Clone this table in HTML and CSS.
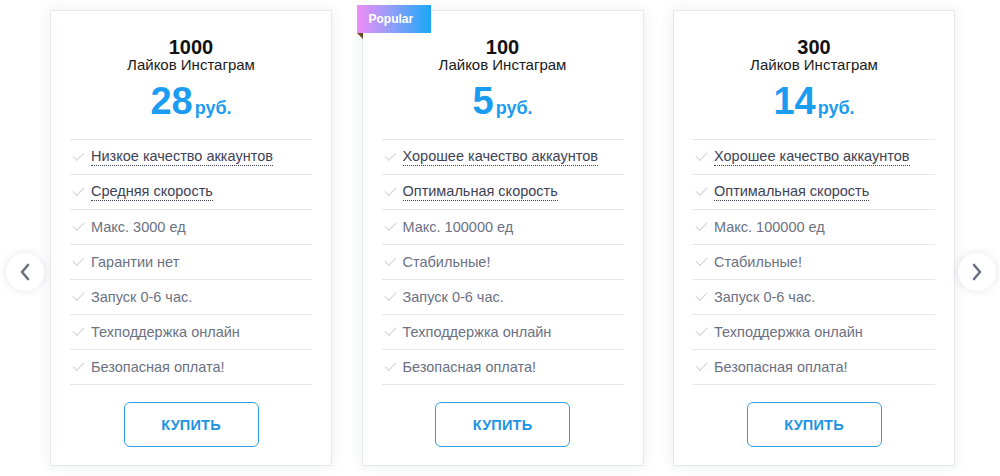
FILE: index.html
```html
<!DOCTYPE html>
<html lang="ru">
<head>
<meta charset="utf-8">
<title>Тарифы</title>
<link rel="stylesheet" href="styles.css">
</head>
<body>
<div class="slider">
  <button class="arrow arrow-left" aria-label="Назад">
    <svg width="14" height="20" viewBox="0 0 14 20"><path d="M10 3 L4 10 L10 17" fill="none" stroke="#6b7080" stroke-width="2.6" stroke-linecap="round" stroke-linejoin="round"/></svg>
  </button>
  <div class="cards">
    <div class="card">
      <div class="qty">1000</div>
      <div class="name">Лайков Инстаграм</div>
      <div class="price"><span class="num">28</span><span class="cur">руб.</span></div>
      <ul class="features">
        <li class="hint"><span class="chk"></span><span class="txt">Низкое качество аккаунтов</span></li>
        <li class="hint"><span class="chk"></span><span class="txt">Средняя скорость</span></li>
        <li><span class="chk"></span><span class="txt">Макс. 3000 ед</span></li>
        <li><span class="chk"></span><span class="txt">Гарантии нет</span></li>
        <li><span class="chk"></span><span class="txt">Запуск 0-6 час.</span></li>
        <li><span class="chk"></span><span class="txt">Техподдержка онлайн</span></li>
        <li><span class="chk"></span><span class="txt">Безопасная оплата!</span></li>
      </ul>
      <button class="buy">КУПИТЬ</button>
    </div>
    <div class="card popular">
      <div class="ribbon">Popular</div>
      <div class="qty">100</div>
      <div class="name">Лайков Инстаграм</div>
      <div class="price"><span class="num">5</span><span class="cur">руб.</span></div>
      <ul class="features">
        <li class="hint"><span class="chk"></span><span class="txt">Хорошее качество аккаунтов</span></li>
        <li class="hint"><span class="chk"></span><span class="txt">Оптимальная скорость</span></li>
        <li><span class="chk"></span><span class="txt">Макс. 100000 ед</span></li>
        <li><span class="chk"></span><span class="txt">Стабильные!</span></li>
        <li><span class="chk"></span><span class="txt">Запуск 0-6 час.</span></li>
        <li><span class="chk"></span><span class="txt">Техподдержка онлайн</span></li>
        <li><span class="chk"></span><span class="txt">Безопасная оплата!</span></li>
      </ul>
      <button class="buy">КУПИТЬ</button>
    </div>
    <div class="card">
      <div class="qty">300</div>
      <div class="name">Лайков Инстаграм</div>
      <div class="price"><span class="num">14</span><span class="cur">руб.</span></div>
      <ul class="features">
        <li class="hint"><span class="chk"></span><span class="txt">Хорошее качество аккаунтов</span></li>
        <li class="hint"><span class="chk"></span><span class="txt">Оптимальная скорость</span></li>
        <li><span class="chk"></span><span class="txt">Макс. 100000 ед</span></li>
        <li><span class="chk"></span><span class="txt">Стабильные!</span></li>
        <li><span class="chk"></span><span class="txt">Запуск 0-6 час.</span></li>
        <li><span class="chk"></span><span class="txt">Техподдержка онлайн</span></li>
        <li><span class="chk"></span><span class="txt">Безопасная оплата!</span></li>
      </ul>
      <button class="buy">КУПИТЬ</button>
    </div>
  </div>
  <button class="arrow arrow-right" aria-label="Вперёд">
    <svg width="14" height="20" viewBox="0 0 14 20"><path d="M4 3 L10 10 L4 17" fill="none" stroke="#6b7080" stroke-width="2.6" stroke-linecap="round" stroke-linejoin="round"/></svg>
  </button>
</div>
</body>
</html>
```
FILE: styles.css
```css
* { box-sizing: border-box; }
html, body { margin: 0; padding: 0; background: #fff; }
body { font-family: "Liberation Sans", Arial, sans-serif; width: 1000px; height: 476px; overflow: hidden; }

.slider { position: relative; padding: 10px 0 0 50px; }
.cards { display: flex; gap: 29.5px; }

.card {
  position: relative;
  width: 282px;
  height: 456px;
  background: #fff;
  border: 1px solid #e6e8ee;
  box-shadow: 0 0 14px rgba(40, 50, 90, 0.09);
  padding: 24px 19px 0;
  display: flex;
  flex-direction: column;
  align-items: center;
}

.qty { font-size: 20px; font-weight: bold; color: #111; line-height: 24px; }
.name { font-size: 15px; color: #1a1a1a; line-height: 18px; margin-top: -3px; }
.price { color: #1a9cf0; font-weight: bold; margin-top: 5px; line-height: 44px; display: flex; align-items: baseline; }
.price .num { font-size: 38px; }
.price .cur { font-size: 18px; margin-left: 2px; }

.features { list-style: none; margin: 9px 0 0; padding: 0; width: 100%; border-top: 1px solid #e4e6ea; }
.features li {
  height: 35px;
  border-bottom: 1px solid #e4e6ea;
  display: flex;
  align-items: center;
  font-size: 14.5px;
  color: #6b7183;
}
.chk {
  width: 11px; height: 6px;
  border-left: 1.6px solid #d0d3da;
  border-bottom: 1.6px solid #d0d3da;
  transform: rotate(-45deg);
  margin: 0 7px 5px 3px;
  flex: none;
}
.features li.hint .txt { color: #3d4256; border-bottom: 1px dotted #3d4256; line-height: 17px; }

.buy {
  margin-top: 17px;
  width: 135px;
  height: 45px;
  background: #fff;
  border: 1.5px solid #2f9fe6;
  border-radius: 6px;
  color: #1c93e3;
  font-family: "Liberation Sans", Arial, sans-serif;
  font-weight: bold;
  font-size: 14.5px;
  letter-spacing: 0.2px;
}

.ribbon {
  position: absolute;
  left: -6px; top: -6px;
  width: 74px; height: 28px;
  background: linear-gradient(90deg, #ee8cf6 0%, #9f9cf8 40%, #1aa8f8 100%);
  color: #fff;
  font-size: 12px;
  font-weight: bold;
  line-height: 28px;
  padding-left: 12px;
}
.ribbon::after {
  content: "";
  position: absolute;
  left: 0; top: 28px;
  border-top: 6px solid #6b4a22;
  border-left: 6px solid transparent;
}

.arrow {
  position: absolute;
  top: 253px;
  width: 38px; height: 38px;
  border-radius: 50%;
  border: none;
  background: #fff;
  box-shadow: 0 0 8px rgba(40, 50, 90, 0.12);
  display: flex; align-items: center; justify-content: center;
  padding: 0;
}
.arrow-left { left: 6px; z-index: 2; }
.arrow-right { left: 958px; z-index: 2; }
```
